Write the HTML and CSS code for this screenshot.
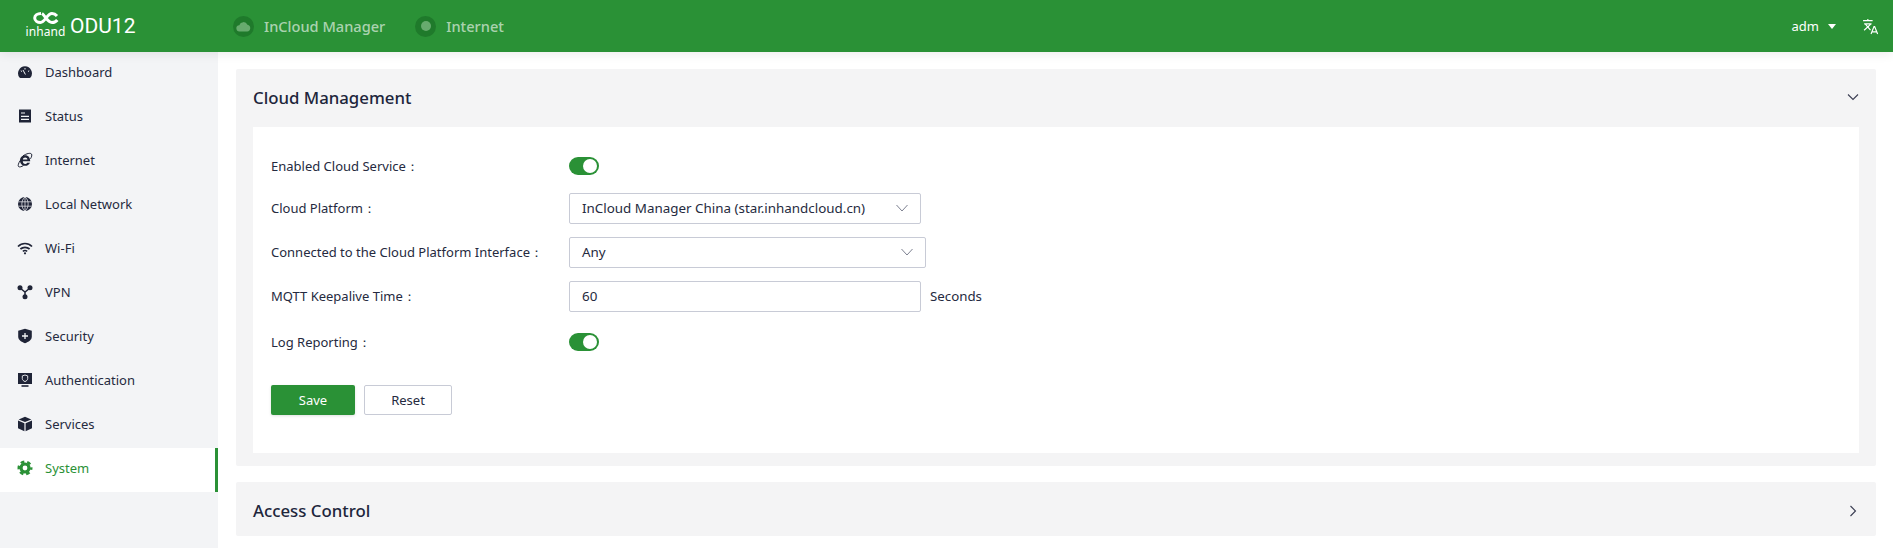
FILE: index.html
```html
<!DOCTYPE html>
<html lang="en">
<head>
<meta charset="utf-8">
<title>ODU12 - Cloud Management</title>
<link rel="stylesheet" href="styles.css">
</head>
<body>
<header class="topbar">
  <div class="brand">
    <div class="logo">
      <svg class="logo-mark" viewBox="0 0 26 12" width="26" height="12"><path d="M8 1.500C4.500 1.500 1.700 3.300 1.700 6S4.500 10.500 7.500 10.500C12 10.500 14 1.500 19 1.500c2 0 3.500.7 5 2.500M24.300 8c-1.300 1.700-3 2.500-5.300 2.500-4.500 0-7-7-10-9" fill="none" stroke="#fff" stroke-width="3"/></svg>
      <span class="logo-word">inhand</span>
    </div>
    <span class="product">ODU12</span>
  </div>
  <div class="status-item">
    <span class="status-dot"><svg viewBox="0 0 16 12" width="15" height="11"><path d="M4 11.500a3.500 3.500 0 0 1-.6-7A4.800 4.800 0 0 1 12.300 4a3.800 3.800 0 0 1-.3 7.500z" fill="#67ab6e"/></svg></span>
    <span>InCloud Manager</span>
  </div>
  <div class="status-item">
    <span class="status-dot"><span class="status-core"></span></span>
    <span>Internet</span>
  </div>
  <div class="top-right">
    <span class="user">adm</span>
    <span class="caret"></span>
    <svg class="lang" viewBox="0 0 16 16" width="17" height="17"><path d="M1 2.500h9M5.500 1v1.500M2 5.500h7M2 11.500 8.500 5.500M3 5.500l5 6" fill="none" stroke="#fff" stroke-width="1.100"/><path d="M8.500 15l2.800-7h.6l2.800 7M9.500 13h4.200" fill="none" stroke="#fff" stroke-width="1.100"/></svg>
  </div>
</header>
<div class="layout">
  <nav class="sidebar">
    <a class="nav-item"><svg class="nav-icon" viewBox="0 0 16 16"><path d="M8 2.300a7 7 0 0 0-5.500 11.200c.2.300.5.400.8.400h9.400c.3 0 .6-.1.800-.4A7 7 0 0 0 8 2.300z" fill="#1f2437"/><path d="M8 4v1.500M3.800 6.800l1.200.7M12.200 6.800l-1.200.7M6 6l2.400 4.500" stroke="#f3f4f6" stroke-width="1" fill="none"/></svg><span>Dashboard</span></a>
    <a class="nav-item"><svg class="nav-icon" viewBox="0 0 16 16"><rect x="2" y="1.500" width="12" height="13" fill="#1f2437"/><path d="M4 5h4M4 8.300h8M4 11.300h8" stroke="#f3f4f6" stroke-width="1.200"/></svg><span>Status</span></a>
    <a class="nav-item"><svg class="nav-icon" viewBox="0 0 16 16"><path d="M3 8.500C3 5.300 5.300 3.200 8.200 3.200c3 0 5 2.200 5 6H5.800c.1 1.700 1 2.700 2.400 2.700.9 0 1.600-.4 2-1.200h2.800c-.8 2-2.700 3.100-4.800 3.100C5.200 13.800 3 11.700 3 8.500zm2.900-1h4.500c-.1-1.200-1-1.900-2.200-1.900S6.100 6.300 5.900 7.500z" fill="#1f2437" fill-rule="evenodd"/><path d="M6 3.800C9.500 1.500 13.500.6 14.500 2c.7 1 .1 3-1 4.800M3.200 8.500C1.500 11.300.7 13.600 1.500 14.500c.9.900 3 .2 5-1" fill="none" stroke="#1f2437" stroke-width="1"/></svg><span>Internet</span></a>
    <a class="nav-item"><svg class="nav-icon" viewBox="0 0 16 16"><circle cx="8" cy="8" r="7" fill="#1f2437"/><path d="M1.500 5.800h13M1.500 10.200h13M8 1v14M8 1C3.800 4 3.800 12 8 15M8 1c4.200 3 4.200 11 0 14" fill="none" stroke="#f3f4f6" stroke-width=".7"/></svg><span>Local Network</span></a>
    <a class="nav-item"><svg class="nav-icon" viewBox="0 0 16 16"><path d="M1 6.500C5 2.500 11 2.500 15 6.500M3.400 9C6 6.700 10 6.700 12.600 9" fill="none" stroke="#1f2437" stroke-width="1.700"/><path d="M5.800 11.300c1.300-1 3.100-1 4.400 0" fill="none" stroke="#1f2437" stroke-width="1.500"/><circle cx="8" cy="13.300" r="1.100" fill="#1f2437"/></svg><span>Wi-Fi</span></a>
    <a class="nav-item"><svg class="nav-icon" viewBox="0 0 16 16"><path d="M3 4l5 4 5-4M8 8v5" stroke="#1f2437" stroke-width="1.500" fill="none"/><circle cx="3" cy="3.800" r="2.500" fill="#1f2437"/><circle cx="13" cy="3.800" r="2.500" fill="#1f2437"/><circle cx="8" cy="12.800" r="2.500" fill="#1f2437"/></svg><span>VPN</span></a>
    <a class="nav-item"><svg class="nav-icon" viewBox="0 0 16 16"><path d="M8 .8l6.800 1.900v6.100c0 3.100-3.200 5.200-6.800 6.400-3.600-1.200-6.800-3.300-6.800-6.400V2.700z" fill="#1f2437"/><path d="M8 5v6M5 8h6" stroke="#f3f4f6" stroke-width="1.300"/></svg><span>Security</span></a>
    <a class="nav-item"><svg class="nav-icon" viewBox="0 0 16 16"><path d="M1 1h14v11H1z" fill="#1f2437"/><path d="M4.500 14h7" stroke="#1f2437" stroke-width="1.600"/><path d="M8 3l2.700.9v2.700c0 1.400-1.300 2.400-2.700 3-1.400-.6-2.700-1.600-2.700-3V3.900z" fill="none" stroke="#f3f4f6" stroke-width=".9"/></svg><span>Authentication</span></a>
    <a class="nav-item"><svg class="nav-icon" viewBox="0 0 16 16"><path d="M8 .8l6.300 2.600L8 6 1.700 3.400z" fill="#1f2437"/><path d="M1 4.500l6.400 2.700V15.300L1 12.300zM15 4.500 8.600 7.200V15.300l6.400-3z" fill="#1f2437"/></svg><span>Services</span></a>
    <a class="nav-item active"><svg class="nav-icon" viewBox="0 0 16 16"><circle cx="8" cy="8" r="4" fill="none" stroke="#2a9136" stroke-width="3.200"/><circle cx="8" cy="8" r="6.300" fill="none" stroke="#2a9136" stroke-width="2.400" stroke-dasharray="3.600 3" stroke-dashoffset="1.800"/></svg><span>System</span></a>
  </nav>
  <main class="content">
    <section class="panel">
      <div class="panel-head">
        <h2>Cloud Management</h2>
        <svg class="chev" viewBox="0 0 12 12" width="12" height="12"><path d="M1 3.500l5 5 5-5" fill="none" stroke="#3a3d52" stroke-width="1.100"/></svg>
      </div>
      <div class="panel-body">
        <div class="row row-switch">
          <label>Enabled Cloud Service：</label>
          <span class="switch"><span class="knob"></span></span>
        </div>
        <div class="row">
          <label>Cloud Platform：</label>
          <div class="select">
            <span>InCloud Manager China (star.inhandcloud.cn)</span>
            <svg viewBox="0 0 12 12" width="12" height="12"><path d="M.5 3l5.500 6 5.500-6" fill="none" stroke="#7d8090" stroke-width="1"/></svg>
          </div>
        </div>
        <div class="row">
          <label>Connected to the Cloud Platform Interface：</label>
          <div class="select select-wide">
            <span>Any</span>
            <svg viewBox="0 0 12 12" width="12" height="12"><path d="M.5 3l5.500 6 5.500-6" fill="none" stroke="#7d8090" stroke-width="1"/></svg>
          </div>
        </div>
        <div class="row">
          <label>MQTT Keepalive Time：</label>
          <div class="input">60</div>
          <span class="unit">Seconds</span>
        </div>
        <div class="row row-switch row-last">
          <label>Log Reporting：</label>
          <span class="switch"><span class="knob"></span></span>
        </div>
        <div class="actions">
          <button class="btn btn-primary">Save</button>
          <button class="btn btn-plain">Reset</button>
        </div>
      </div>
    </section>
    <section class="panel panel-closed">
      <div class="panel-head">
        <h2>Access Control</h2>
        <svg class="chev" viewBox="0 0 12 12" width="12" height="12"><path d="M3.500 1l5 5-5 5" fill="none" stroke="#3a3d52" stroke-width="1.100"/></svg>
      </div>
    </section>
  </main>
</div>
</body>
</html>
```
FILE: styles.css
```css
* { box-sizing: border-box; }
html, body { margin: 0; height: 548px; overflow: hidden; }
body { font-family: "Noto Sans", "Open Sans", sans-serif; font-size: 13px; color: #252a40; background: #fff; }
.topbar { position: relative; z-index: 2; height: 52px; background: #2a9136; display: flex; align-items: center; padding: 0 14px 0 27px; box-shadow: 0 2px 10px rgba(0,0,0,.08); }
.brand { display: flex; align-items: center; width: 206px; }
.logo { width: 37px; display: flex; flex-direction: column; align-items: center; margin-right: 6px; }
.logo-mark { display: block; }
.logo-word { color: #fff; font-size: 12px; line-height: 16px; letter-spacing: .1px; }
.product { color: #fff; font-family: "Roboto", sans-serif; font-weight: 400; font-size: 21px; }
.status-item { display: flex; align-items: center; gap: 10px; color: rgba(255,255,255,.62); font-size: 14.600px; font-weight: 500; margin-right: 30px; }
.status-dot { width: 21px; height: 21px; border-radius: 50%; background: #1f7a2b; display: flex; align-items: center; justify-content: center; }
.status-core { width: 10px; height: 10px; border-radius: 50%; background: #67ab6e; }
.top-right { margin-left: auto; display: flex; align-items: center; color: #fff; }
.caret { width: 0; height: 0; border-left: 4.500px solid transparent; border-right: 4.500px solid transparent; border-top: 5px solid #fff; margin: 0 26px 0 9px; }
.lang { display: block; }
.layout { display: flex; height: 496px; }
.sidebar { width: 218px; flex: none; background: #f3f4f6; }
.nav-item { display: flex; align-items: center; gap: 12px; height: 44px; padding: 0 0 4px 17px; color: #252a40; }
.nav-icon { width: 16px; height: 16px; flex: none; }
.nav-item.active { background: #fff; color: #2a9136; border-right: 3px solid #2a9136; }
.content { flex: 1; padding: 17px 17px 0 18px; }
.panel { background: #f4f4f5; padding-bottom: 13px; border-radius: 2px; margin-bottom: 16px; }
.panel-closed { padding-bottom: 0; }
.panel-head { height: 58px; display: flex; align-items: center; justify-content: space-between; padding: 0 17px 2px 17px; }
.panel-closed .panel-head { height: 54px; padding-top: 3px; padding-bottom: 0; }
.panel-head h2 { margin: 0; font-size: 16.800px; font-weight: 500; color: #20253b; }
.chev { flex: none; }
.panel-body { background: #fff; margin: 0 17px; height: 326px; padding: 26px 18px 0; }
.row { display: flex; align-items: center; height: 44px; }
.row-switch { height: 26px; margin-bottom: 7px; }
.row-last { height: 30px; margin-top: 9px; margin-bottom: 0; }
.row label { width: 298px; flex: none; }
.switch { width: 30px; height: 18px; border-radius: 9px; background: #2a9136; display: flex; justify-content: flex-end; align-items: center; padding-right: 2px; }
.knob { width: 14px; height: 14px; border-radius: 50%; background: #fff; }
.select, .input { width: 352px; height: 31px; border: 1px solid #c8cbd6; border-radius: 2px; background: #fff; display: flex; align-items: center; justify-content: space-between; padding: 0 12px; font-size: 13.400px; }
.select-wide { width: 357px; }
.unit { margin-left: 9px; font-size: 13.300px; }
.actions { display: flex; gap: 9px; margin-top: 28px; }
.btn { width: 84px; height: 30px; font: inherit; border-radius: 2px; }
.btn-primary { background: #2a9136; color: #fff; border: 0; box-shadow: 0 1px 3px rgba(0,0,0,.12); }
.btn-plain { width: 88px; background: #fff; color: #252a40; border: 1px solid #c8cbd6; }
```
